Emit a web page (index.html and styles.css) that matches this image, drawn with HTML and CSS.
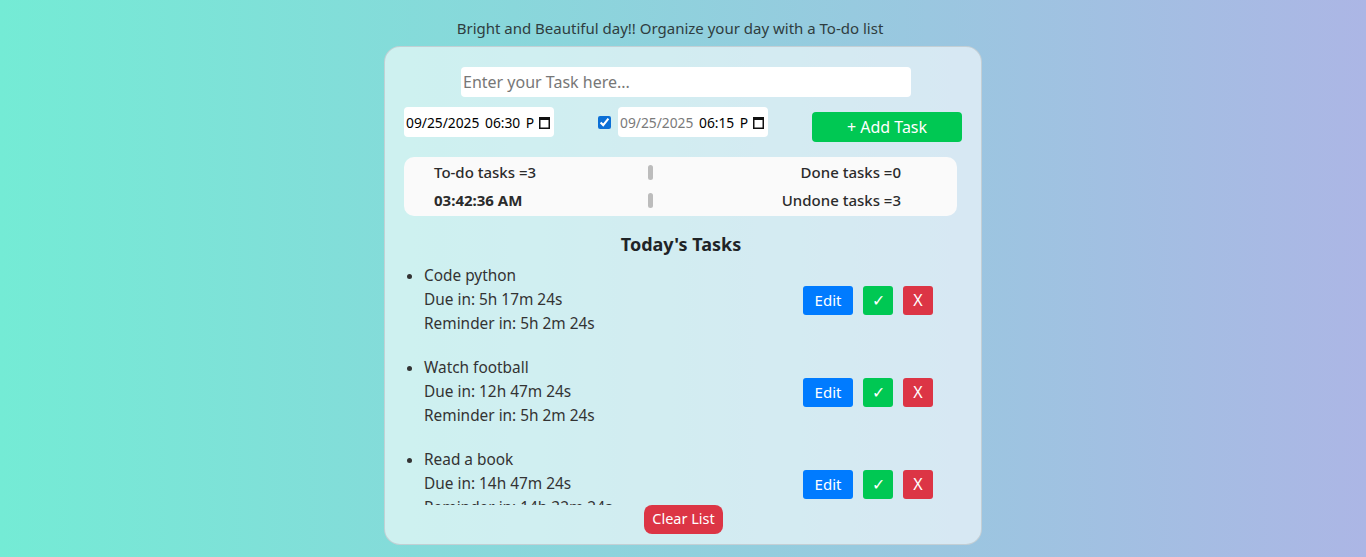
FILE: index.html
```html
<!DOCTYPE html>
<html lang="en">
<head>
<meta charset="utf-8">
<title>To-do list</title>
<link rel="stylesheet" href="styles.css">
</head>
<body>
<div class="page">
  <p class="tagline">Bright and Beautiful day!! Organize your day with a To-do list</p>
  <main class="card">
    <input class="task-input" type="text" placeholder="Enter your Task here...">
    <div class="controls">
      <div class="dt">
        <span class="dt-text">09/25/2025 06:30 PM</span>
        <svg class="cal" width="11" height="13" viewBox="0 0 11 13" aria-hidden="true">
          <rect x="0.75" y="1.75" width="9.5" height="10.5" fill="none" stroke="#111" stroke-width="1.5"/>
          <rect x="0" y="1" width="11" height="3" fill="#111"/>
        </svg>
      </div>
      <span class="reminder">
        <input class="chk" type="checkbox" checked>
        <div class="dt">
          <span class="dt-text"><span class="muted">09/25/2025</span> 06:15 PM</span>
          <svg class="cal" width="11" height="13" viewBox="0 0 11 13" aria-hidden="true">
            <rect x="0.75" y="1.75" width="9.5" height="10.5" fill="none" stroke="#111" stroke-width="1.5"/>
            <rect x="0" y="1" width="11" height="3" fill="#111"/>
          </svg>
        </div>
      </span>
      <button class="add-btn">+ Add Task</button>
    </div>
    <section class="stats">
      <div class="stat-left">To-do tasks =3</div>
      <div class="sep"></div>
      <div class="stat-right">Done tasks =0</div>
      <div class="stat-left clock">03:42:36 AM</div>
      <div class="sep"></div>
      <div class="stat-right">Undone tasks =3</div>
    </section>
    <h2 class="list-title">Today's Tasks</h2>
    <div class="list-wrap">
      <ul class="tasks">
        <li>
          <div class="task">
            <div class="task-text">
              <div>Code python</div>
              <div>Due in: 5h 17m 24s</div>
              <div>Reminder in: 5h 2m 24s</div>
            </div>
            <div class="actions">
              <button class="btn edit">Edit</button>
              <button class="btn done">✓</button>
              <button class="btn del">X</button>
            </div>
          </div>
        </li>
        <li>
          <div class="task">
            <div class="task-text">
              <div>Watch football</div>
              <div>Due in: 12h 47m 24s</div>
              <div>Reminder in: 5h 2m 24s</div>
            </div>
            <div class="actions">
              <button class="btn edit">Edit</button>
              <button class="btn done">✓</button>
              <button class="btn del">X</button>
            </div>
          </div>
        </li>
        <li>
          <div class="task">
            <div class="task-text">
              <div>Read a book</div>
              <div>Due in: 14h 47m 24s</div>
              <div>Reminder in: 14h 32m 24s</div>
            </div>
            <div class="actions">
              <button class="btn edit">Edit</button>
              <button class="btn done">✓</button>
              <button class="btn del">X</button>
            </div>
          </div>
        </li>
      </ul>
    </div>
    <div class="clear-row"><button class="clear-btn">Clear List</button></div>
  </main>
</div>
</body>
</html>
```

FILE: styles.css
```css
html, body {
  margin: 0;
  padding: 0;
}
body {
  height: 557px;
  background: linear-gradient(to right, #74ebd5, #acb6e5);
  font-family: "Noto Sans", "Open Sans", sans-serif;
  color: #333;
}
.page {
  display: flex;
  flex-direction: column;
  align-items: center;
}
.tagline {
  margin: 18px 26px 0 0;
  font-size: 15px;
  line-height: 20px;
  color: #2f3d40;
}
.card {
  box-sizing: border-box;
  width: 598px;
  height: 499px;
  margin-top: 8px;
  padding: 20px 19px 10px 19px;
  background: rgba(255, 255, 255, 0.6);
  border: 1px solid rgba(190, 200, 205, 0.8);
  border-radius: 16px;
  display: flex;
  flex-direction: column;
}
.task-input {
  box-sizing: border-box;
  align-self: center;
  width: 450px;
  height: 30px;
  margin-left: 6px;
  border: none;
  border-radius: 4px;
  padding: 0 2px;
  font-family: inherit;
  font-size: 16px;
  background: #fff;
  color: #333;
}
.task-input::placeholder {
  color: #777;
}
.controls {
  display: flex;
  align-items: flex-start;
  margin-top: 10px;
}
.dt {
  box-sizing: border-box;
  width: 150px;
  height: 30px;
  border-radius: 4px;
  background: #fff;
  padding: 0 4px 0 2px;
  display: flex;
  align-items: center;
  font-family: "Noto Sans", sans-serif;
  font-size: 13.8px;
  word-spacing: 2px;
  color: #000;
}
.dt-text {
  flex: 1;
  white-space: nowrap;
  overflow: hidden;
  margin-right: 4px;
}
.muted {
  color: #7a7a7a;
}
.cal {
  flex: none;
}
.reminder {
  display: flex;
  align-items: center;
  margin-left: 44px;
}
.chk {
  width: 13px;
  height: 13px;
  margin: 0 7px 0 0;
  accent-color: #0b6fd6;
}
.add-btn {
  box-sizing: border-box;
  width: 150px;
  height: 30px;
  margin-top: 5px;
  margin-left: auto;
  border: none;
  border-radius: 4px;
  background: #00c853;
  color: #fff;
  font-family: inherit;
  font-size: 16px;
}
.stats {
  box-sizing: border-box;
  width: 553px;
  margin-top: 15px;
  padding: 5px 56px 6px 30px;
  background: #fafafa;
  border-radius: 10px;
  display: grid;
  grid-template-columns: 214px 5px 1fr;
  row-gap: 8px;
  align-items: center;
  font-size: 15px;
  line-height: 20px;
  font-weight: 500;
  color: #2b2b2b;
}
.clock {
  font-weight: 700;
}
.stat-right {
  text-align: right;
}
.sep {
  width: 5px;
  height: 15px;
  border-radius: 3px;
  background: #bcbcbc;
}
.list-title {
  margin: 16px 0 8px 0;
  padding-right: 4px;
  text-align: center;
  font-size: 18px;
  line-height: 24px;
  font-weight: 700;
  color: #1f2427;
}
.list-wrap {
  height: 241px;
  overflow: hidden;
}
.tasks {
  margin: 0;
  padding: 0 29px 0 20px;
}
.tasks li {
  margin-bottom: 20px;
  font-size: 15.4px;
  line-height: 24px;
  color: #333;
}
.task {
  display: flex;
  justify-content: space-between;
  align-items: center;
}
.actions {
  display: flex;
  gap: 10px;
}
.btn {
  box-sizing: border-box;
  height: 29px;
  width: 30px;
  padding: 0;
  border: none;
  border-radius: 3px;
  color: #fff;
  font-family: inherit;
  font-size: 16px;
}
.btn.edit {
  width: 50px;
  font-size: 15px;
  background: #007bff;
}
.btn.done {
  background: #00c853;
}
.btn.del {
  background: #dc3545;
}
.clear-row {
  display: flex;
  justify-content: center;
  padding-left: 1px;
}
.clear-btn {
  box-sizing: border-box;
  width: 79px;
  height: 29px;
  border: none;
  border-radius: 8px;
  background: #dc3545;
  color: #fff;
  font-family: inherit;
  font-size: 14.5px;
  padding: 0 0 3px 0;
}
```
